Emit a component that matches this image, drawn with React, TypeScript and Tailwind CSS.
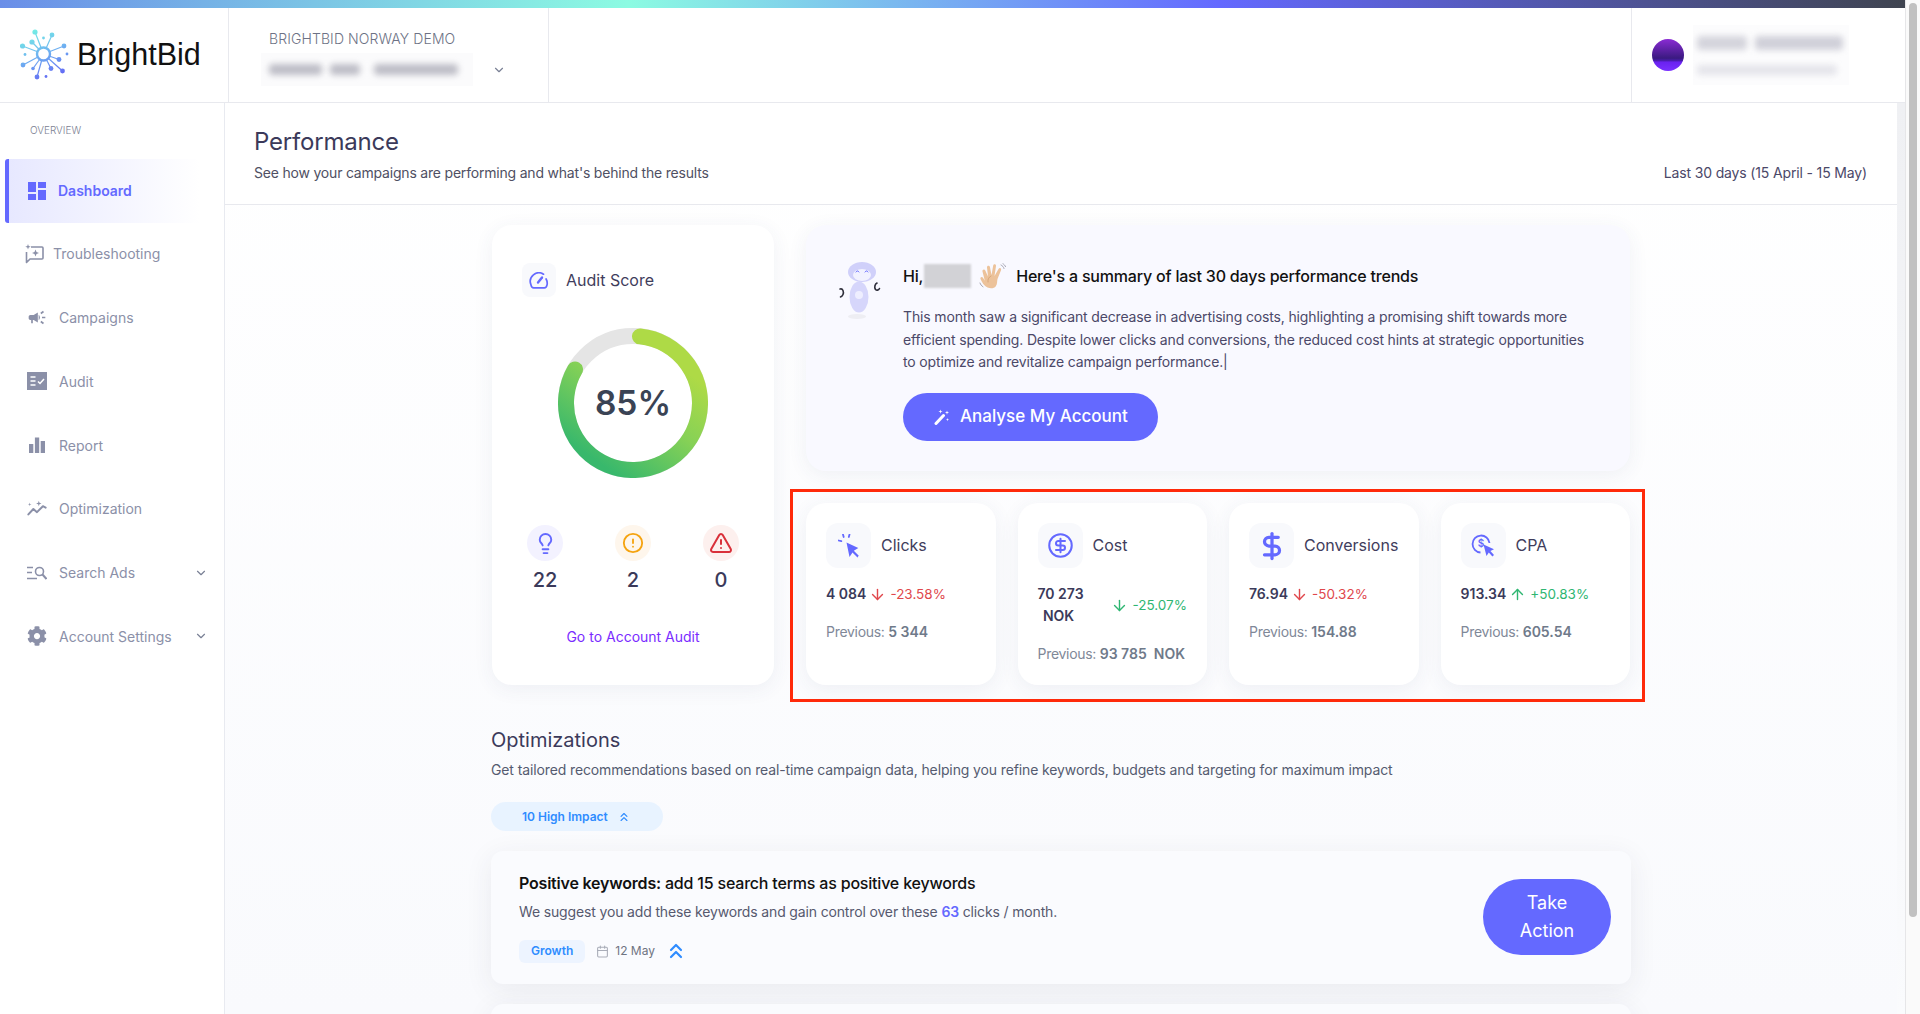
import React from "react";
import { Calendar, ChevronDown, ChevronsUp, CircleAlert, CircleDollarSign, DollarSign, Lightbulb, TriangleAlert, ArrowDown, ArrowUp } from "lucide-react";
import { FaCog } from "react-icons/fa";
import { MdCampaign, MdDashboard } from "react-icons/md";

const dots: [number, number, number][] = [
  [35, 32, 2.6], [52, 35, 2.4], [43.5, 38, 1.4], [32, 42, 2.6], [22.5, 46, 2.6],
  [25, 54.5, 1.4], [64, 46, 2.4], [67, 54, 1.4], [23, 65, 2.4], [59, 59.5, 2.4],
  [33, 68.5, 1.8], [51, 68.5, 2.4], [62.5, 71, 2.4], [37, 77, 2.4], [46, 76.5, 1.4],
];
const lines: [number, number][] = [
  [35, 32], [52, 35], [32, 42], [22.5, 46], [64, 46], [23, 65], [59, 59.5], [33, 68.5], [51, 68.5], [62.5, 71], [37, 77],
];

function Logo() {
  return (
    <svg width="50" height="52" viewBox="20 29 50 52" fill="none">
      <defs>
        <linearGradient id="logoGrad" gradientUnits="userSpaceOnUse" x1="30" y1="30" x2="50" y2="80">
          <stop offset="0" stopColor="#74f0e4" />
          <stop offset="0.45" stopColor="#6fb8f0" />
          <stop offset="1" stopColor="#6367f5" />
        </linearGradient>
      </defs>
      {lines.map(([x, y]) => (
        <line key={`${x}-${y}`} x1="43.5" y1="54" x2={x} y2={y} stroke="url(#logoGrad)" strokeWidth="1.2" />
      ))}
      <circle cx="43.5" cy="54" r="6.5" fill="#fff" stroke="url(#logoGrad)" strokeWidth="2.4" />
      {dots.map(([x, y, r]) => (
        <circle key={`${x}-${y}`} cx={x} cy={y} r={r} fill="url(#logoGrad)" />
      ))}
    </svg>
  );
}

function TroubleIcon() {
  return (
    <svg width="19" height="20" viewBox="0 0 19 20" fill="none" stroke="#8b90a8" strokeWidth="1.6" strokeLinejoin="round">
      <path d="M6 3h11a1 1 0 0 1 1 1v10a1 1 0 0 1-1 1H5l-3.500 3.500V8" />
      <path d="M10.500 5.500l1 2.500 2.500 1-2.500 1-1 2.500-1-2.500-2.500-1 2.500-1z" fill="#8b90a8" stroke="none" />
      <path d="M3 0l.7 2 2 .7-2 .7L3 5.400l-.7-2-2-.7 2-.7z" fill="#8b90a8" stroke="none" />
    </svg>
  );
}

function AuditIcon() {
  return (
    <svg width="20" height="18" viewBox="0 0 20 18" fill="none">
      <rect width="20" height="18" fill="#8b90a8" />
      <path d="M3.500 5h5M3.500 9h5M3.500 13h5" stroke="#fff" strokeWidth="1.500" />
      <path d="M11 9.500l2 2 4-4.500" stroke="#fff" strokeWidth="1.500" />
    </svg>
  );
}

function ReportIcon() {
  return (
    <svg width="16" height="16" viewBox="0 0 16 16" fill="#8b90a8">
      <rect x="0" y="7" width="4.300" height="9" />
      <rect x="5.900" y="0.500" width="4.300" height="15.500" />
      <rect x="11.700" y="4" width="4.300" height="12" />
    </svg>
  );
}

function OptimizeIcon() {
  return (
    <svg width="22" height="17" viewBox="0 0 22 17" fill="none">
      <path d="M1.500 15l5.500-6 4 3.500 6.500-6.500 3 1.500" stroke="#8b90a8" strokeWidth="2.200" strokeLinecap="round" strokeLinejoin="round" />
      <path d="M13 0l.7 2.300L16 3l-2.300.7L13 6l-.7-2.300L10 3l2.300-.7z" fill="#8b90a8" />
      <path d="M3 2l.4 1.600L5 4l-1.600.4L3 6l-.4-1.600L1 4l1.600-.4z" fill="#8b90a8" />
    </svg>
  );
}

function SearchAdsIcon() {
  return (
    <svg width="20" height="14" viewBox="0 0 20 14" fill="none" stroke="#8b90a8" strokeWidth="1.600">
      <path d="M0 1.500h6M0 6.500h5M0 12.500h10" />
      <circle cx="12.500" cy="5.500" r="4" />
      <path d="M15.500 8.500l4 4.500" strokeWidth="2" />
    </svg>
  );
}

function GaugeIcon() {
  return (
    <svg width="20" height="17" viewBox="0 0 20 17" fill="none" stroke="#6469ff" strokeWidth="1.700" strokeLinecap="round">
      <path d="M14.500 2.200A8.600 8.600 0 0 0 1.900 12.600c.3 1.600 1 3.200 2.800 3.200h10.600c1.800 0 2.500-1.600 2.800-3.200.4-2.300-.1-4-1-5.600" />
      <path d="M9 10.500L13 5.500" strokeWidth="2.400" />
    </svg>
  );
}

function ClicksIcon() {
  return (
    <svg width="22" height="24" viewBox="0 0 22 24" fill="none">
      <path d="M8.500 8.500l3 14.500 3-4.500 5 5 .5-.5-.2-.3 1-1-5-5 4.500-2.700z" fill="#6469ff" />
      <path d="M5 0.500l.7 2.500M11.500 0.500l-.7 2.500M0.500 6.500l2.800.7" stroke="#6469ff" strokeWidth="1.800" strokeLinecap="round" />
    </svg>
  );
}

function CpaIcon() {
  return (
    <svg width="24" height="25" viewBox="0 0 24 25" fill="none">
      <path d="M9.500 19.500a8.500 8.500 0 1 1 9-9.500" stroke="#6469ff" strokeWidth="1.800" />
      <text x="10" y="13.500" textAnchor="middle" fontSize="10" fontWeight="600" fill="#6469ff" fontFamily="Inter, sans-serif">$</text>
      <path d="M12.500 11.500l3 11.500 2.300-3.500 3.600 4 1.600-1.400-3.600-4 3.600-1.800z" fill="#6469ff" />
    </svg>
  );
}

function WandIcon() {
  return (
    <svg width="16" height="16" viewBox="0 0 16 16" fill="none">
      <path d="M2 14.500L9.500 6.500" stroke="#fff" strokeWidth="3" strokeLinecap="round" />
      <path d="M6.500 0.500l.5 1.600 1.600.5-1.600.5-.5 1.600-.5-1.600-1.600-.5 1.600-.5z" fill="#fff" />
      <path d="M13 1.500l.5 1.600 1.600.5-1.600.5-.5 1.600-.5-1.600-1.600-.5 1.600-.5z" fill="#fff" />
      <path d="M13.500 9l.4 1.200 1.200.4-1.200.4-.4 1.200-.4-1.200-1.200-.4 1.200-.4z" fill="#fff" />
    </svg>
  );
}

function WaveIcon() {
  return (
    <svg width="28" height="26" viewBox="0 0 28 26" fill="none">
      <path d="M8.500 24.500c-3.500-1.500-5.500-5-7-8.500-.6-1.800 1.500-2.700 2.500-1.200l1.800 3L3.500 8.500C3 6.500 5.500 5.700 6.300 7.500L9 13.500 8 4.500c-.2-2.200 2.500-2.400 3-.3L12.500 12 14.200 2.500c.4-2 3-1.600 2.800.5L15.500 13l4-7c1-1.800 3.300-.6 2.500 1.200L18.500 16c-.6 2.500 0 4.800-1.700 7.200-1.700 2.300-5.200 2.600-8.300 1.300z" fill="#ecc29a" />
      <path d="M12 13c-2 1-3.500 3-3 6" stroke="#d29f72" strokeWidth="0.800" strokeLinecap="round" />
      <path d="M22 2c1.500.7 2.500 1.800 3 3.500M24 .8c1 .5 2 1.500 2.500 2.800M1 20c.5 1.500 1.500 2.800 3 3.800" stroke="#9c9caa" strokeWidth="0.900" strokeLinecap="round" />
    </svg>
  );
}

function Mascot() {
  return (
    <svg width="46" height="58" viewBox="0 0 46 58" fill="none">
      <ellipse cx="20" cy="54.500" rx="9" ry="2.500" fill="#eeeef3" />
      <ellipse cx="22" cy="35" rx="9.500" ry="15.500" fill="#d6d6fb" />
      <circle cx="22" cy="33" r="4" fill="#eeeeff" />
      <ellipse cx="25" cy="10" rx="14" ry="10" fill="#d0d0fa" />
      <ellipse cx="25" cy="13" rx="9" ry="6" fill="#f2f2ff" />
      <path d="M19 10c1-1.500 2-1.500 3 0M28 10c1-1.500 2-1.500 3 0" stroke="#6469ff" strokeWidth="1" strokeLinecap="round" />
      <path d="M3 27c3-1 4 3 3 5.500-.5 1.300-1.500 2-2.500 2.500" stroke="#2e2e3a" strokeWidth="1.600" strokeLinecap="round" />
      <path d="M40 21c-2 1-3 4-1.500 6.500 1 1 3 1 4-1" stroke="#2e2e3a" strokeWidth="1.600" strokeLinecap="round" />
    </svg>
  );
}

function NavItem({ icon, label, chevron, tight }: { icon: React.ReactNode; label: string; chevron?: boolean; tight?: boolean }) {
  return (
    <div className={`flex h-[63.75px] items-center pb-[2px] pr-[16px] ${tight ? "pl-[24px]" : "pl-[27px]"}`}>
      <span className={`flex h-5 w-5 shrink-0 items-center justify-center ${tight ? "mr-[9px]" : "mr-3"}`}>{icon}</span>
      <span className="flex-1 text-[14px] text-[#8b90a8]">{label}</span>
      {chevron && <ChevronDown size={14} color="#7a8095" strokeWidth={2} />}
    </div>
  );
}

function Sidebar() {
  return (
    <aside className="w-[225px] shrink-0 border-r border-[#e8eaf0] bg-white">
      <p className="pl-[30px] pt-[20px] text-[10px] leading-[14px] font-light text-[#7b8092]">OVERVIEW</p>
      <div className="mt-[22px]">
        <div className="ml-[5px] flex h-[64px] w-[195px] items-center rounded-l-[3px] border-l-4 border-[#6469ff] bg-gradient-to-r from-[#e7e8ff] to-white pb-[1px] pl-[16px]">
          <MdDashboard size={24} color="#6469ff" className="mr-[9px] shrink-0" />
          <span className="text-[14px] font-semibold text-[#6469ff]">Dashboard</span>
        </div>
        <NavItem tight icon={<TroubleIcon />} label="Troubleshooting" />
        <NavItem icon={<MdCampaign size={27} color="#8b90a8" />} label="Campaigns" />
        <NavItem icon={<AuditIcon />} label="Audit" />
        <NavItem icon={<ReportIcon />} label="Report" />
        <NavItem icon={<OptimizeIcon />} label="Optimization" />
        <NavItem chevron icon={<SearchAdsIcon />} label="Search Ads" />
        <NavItem chevron icon={<FaCog size={20} color="#8b90a8" />} label="Account Settings" />
      </div>
    </aside>
  );
}

function AuditCard() {
  return (
    <div className="flex h-[460px] w-[282px] shrink-0 flex-col items-center rounded-[20px] bg-white pt-[38px] shadow-[0_4px_20px_rgba(60,70,110,0.07)]">
      <div className="flex w-full items-center pl-[30px]">
        <span className="flex h-[34px] w-[34px] items-center justify-center rounded-[8px] bg-[#f8f9fc]">
          <GaugeIcon />
        </span>
        <span className="ml-[10px] text-[16px] text-[#3f3d5c]">Audit Score</span>
      </div>
      <div className="relative mt-[31px] h-[150px] w-[150px]">
        <svg width="150" height="150" viewBox="0 0 150 150" fill="none">
          <defs>
            <linearGradient id="ringGrad" x1="0.85" y1="0.1" x2="0.25" y2="0.95">
              <stop offset="0.1" stopColor="#aeda46" />
              <stop offset="0.5" stopColor="#86d156" />
              <stop offset="1" stopColor="#38b86c" />
            </linearGradient>
          </defs>
          <circle cx="75" cy="75" r="67" stroke="#e5e5e5" strokeWidth="16" />
          <path d="M82 8.400A67 67 0 1 1 17 41.500" stroke="url(#ringGrad)" strokeWidth="16" strokeLinecap="round" />
        </svg>
        <span className="absolute inset-0 flex items-center justify-center text-[33.500px] font-semibold text-[#3a4354]">85%</span>
      </div>
      <div className="mt-[47px] grid w-full grid-cols-3 px-[9px] text-center">
        <AuditStat bg="bg-[#f3f2ff]" value="22" icon={<Lightbulb size={23} color="#6469ff" strokeWidth={2} />} />
        <AuditStat bg="bg-[#fef6ec]" value="2" icon={<CircleAlert size={22} color="#f5a30f" strokeWidth={2} />} />
        <AuditStat bg="bg-[#fdf0ee]" value="0" icon={<TriangleAlert size={24} color="#d9303a" strokeWidth={2} />} />
      </div>
      <a className="mt-[32px] text-[14px] leading-[22px] text-[#7a2cff]">Go to Account Audit</a>
    </div>
  );
}

function AuditStat({ bg, value, icon }: { bg: string; value: string; icon: React.ReactNode }) {
  return (
    <div className="flex flex-col items-center">
      <span className={`flex h-9 w-9 items-center justify-center rounded-full ${bg}`}>{icon}</span>
      <span className="mt-[5px] text-[20px] leading-[28px] font-medium text-[#3b3a5a]">{value}</span>
    </div>
  );
}

function SummaryCard() {
  return (
    <div className="flex h-[246px] rounded-[20px] bg-[#f9f9ff] pl-[31px] pt-[37px] shadow-[0_4px_20px_rgba(60,70,110,0.07)]">
      <div className="w-[46px] shrink-0">
        <Mascot />
      </div>
      <div className="ml-[20px] flex-1 pr-[30px]">
        <div className="flex h-[26px] items-center pt-[1px] text-[16px] font-medium tracking-[-0.2px] text-[#111]">
          <span>Hi,</span>
          <span className="ml-[1px] h-[24px] w-[47px] bg-[#d2d2d6] blur-[1px]" />
          <span className="ml-[8px]">
            <WaveIcon />
          </span>
          <span className="ml-[9px]">Here's a summary of last 30 days performance trends</span>
        </div>
        <p className="mt-[18px] text-[14px] leading-[22.700px] tracking-[-0.15px] text-[#4b4868]">
          This month saw a significant decrease in advertising costs, highlighting a promising shift towards more efficient spending. Despite lower clicks and conversions, the reduced cost hints at strategic opportunities to optimize and revitalize campaign performance.|
        </p>
        <button className="mt-[19px] flex h-12 w-[255px] items-center rounded-full bg-[#6469ff] pl-[31px] text-[17px] font-medium text-white">
          <span className="mr-[10px]">
            <WandIcon />
          </span>
          Analyse My Account
        </button>
      </div>
    </div>
  );
}

function MetricCard({ icon, label, value, delta, up, good, prev, split }: {
  icon: React.ReactNode; label: string; value: React.ReactNode; delta: string; up?: boolean; good?: boolean; prev: string; split?: boolean;
}) {
  const color = good ? "text-[#2fb672]" : "text-[#e0474c]";
  return (
    <div className="rounded-[20px] bg-white px-[20px] pt-[20px] shadow-[0_4px_20px_rgba(60,70,110,0.07)]">
      <div className="flex items-center">
        <span className="flex h-[45px] w-[45px] items-center justify-center rounded-[12px] bg-[#f8f9fc]">{icon}</span>
        <span className="ml-[10px] pb-[1px] text-[16px] text-[#3f3d5c]">{label}</span>
      </div>
      <div className={`mt-[15px] flex items-center text-[14px] leading-[22px] ${split ? "justify-between" : ""}`}>
        <span className="font-semibold text-[#3b3a5a]">{value}</span>
        <span className={`flex items-center text-[13.500px] ${split ? "" : "ml-[3px]"} ${color}`}>
          {up ? <ArrowUp size={17} strokeWidth={2} className="mr-[4px]" /> : <ArrowDown size={17} strokeWidth={2} className="mr-[4px]" />}
          {delta}
        </span>
      </div>
      <p className="mt-[16px] text-[14px] leading-[22px] tracking-[-0.3px] whitespace-pre text-[#7f8898]">
        Previous: <span className="font-semibold tracking-normal text-[#6f7a8a]">{prev}</span>
      </p>
    </div>
  );
}

function Metrics() {
  return (
    <div className="relative mt-[32px] grid h-[182px] grid-cols-4 gap-[22px]">
      <MetricCard icon={<ClicksIcon />} label="Clicks" value="4 084" delta="-23.58%" prev="5 344" />
      <MetricCard
        split
        good
        icon={<CircleDollarSign size={27} color="#6469ff" strokeWidth={1.8} />}
        label="Cost"
        value={
          <span className="block text-center">
            70 273
            <br />
            <span className="pr-[4px]">NOK</span>
          </span>
        }
        delta="-25.07%"
        prev="93 785  NOK"
      />
      <MetricCard icon={<DollarSign size={30} color="#6469ff" strokeWidth={2.6} />} label="Conversions" value="76.94" delta="-50.32%" prev="154.88" />
      <MetricCard up good icon={<CpaIcon />} label="CPA" value="913.34" delta="+50.83%" prev="605.54" />
      <div className="pointer-events-none absolute -bottom-[17px] -left-4 -right-[15px] -top-[14px] border-[3px] border-[#ff2a0a]" />
    </div>
  );
}

function OptimizationCard() {
  return (
    <div className="flex h-[133px] items-start justify-between rounded-[12px] bg-[#fafbfe] pl-[28px] pr-[20px] pt-[21px] shadow-[0_6px_28px_rgba(50,55,80,0.08)]">
      <div>
        <p className="text-[16px] leading-[22px] font-medium tracking-[-0.2px] text-[#111]">
          <span className="font-semibold">Positive keywords:</span> add 15 search terms as positive keywords
        </p>
        <p className="mt-[7px] text-[14px] leading-[22px] tracking-[-0.15px] text-[#56596e]">
          We suggest you add these keywords and gain control over these <span className="font-semibold text-[#6469ff]">63</span> clicks / month.
        </p>
        <div className="mt-[16px] flex items-center">
          <span className="flex h-[23px] items-center rounded-[6px] bg-[#edf4ff] px-[12px] text-[12px] font-semibold text-[#2f8cff]">Growth</span>
          <Calendar size={13} color="#a9adb8" className="ml-[11px]" />
          <span className="ml-[6px] text-[12px] text-[#6f7482]">12 May</span>
          <ChevronsUp size={24} color="#2f8cff" strokeWidth={2.2} className="ml-[9px]" />
        </div>
      </div>
      <button className="mt-[7px] h-[76px] w-[128px] rounded-[38px] bg-[#6469ff] px-[30px] text-[18px] leading-[28px] text-white">Take Action</button>
    </div>
  );
}

export default function App() {
  return (
    <div className="flex h-[1014px] w-full overflow-hidden bg-white font-['Inter',sans-serif]">
      <div className="flex min-w-0 flex-1 flex-col">
        <div className="h-2 shrink-0 bg-[linear-gradient(90deg,#6a8ee8_0%,#8cfbe2_33%,#6469ff_64%,#3f4450_100%)]" />
        <header className="flex h-[95px] shrink-0 border-b border-[#e8e9ee] bg-white">
          <div className="flex w-[229px] shrink-0 items-center border-r border-[#e8e9ee] pl-[20px]">
            <Logo />
            <span className="ml-[7px] font-['Liberation_Sans',sans-serif] text-[30.500px] text-[#111]">BrightBid</span>
          </div>
          <div className="flex w-[320px] shrink-0 flex-col border-r border-[#e8e9ee] pl-[40px]">
            <p className="mt-[22px] text-[14px] leading-[18px] font-light tracking-[0.1px] text-[#6d7285]">BRIGHTBID NORWAY DEMO</p>
            <div className="mt-[5px] flex h-[33px] items-center">
              <div className="ml-[-8px] flex h-[33px] w-[212px] items-start gap-[8px] overflow-hidden bg-[#fbfbfc] pl-[8px] pt-[11px]">
                <div className="h-[11px] w-[53px] rounded-sm bg-[#bdbdc6] blur-[3px]" />
                <div className="h-[11px] w-[30px] rounded-sm bg-[#bdbdc6] blur-[3px]" />
                <div className="ml-[6px] h-[11px] w-[84px] rounded-sm bg-[#bdbdc6] blur-[3px]" />
              </div>
              <ChevronDown size={14} color="#7a8095" className="ml-[19px]" />
            </div>
          </div>
          <div className="flex-1" />
          <div className="flex w-[274px] shrink-0 items-center border-l border-[#e8e9ee] pl-[20px]">
            <span className="h-8 w-8 rounded-full bg-[linear-gradient(180deg,#8a2bd4_0%,#3a1a80_60%,#4a1cb0_68%,#6a22f0_72%,#7a30ff_100%)]" />
            <div className="ml-[9px] h-[60px] w-[156px] overflow-hidden bg-[#fcfcfd] px-[4px] pt-[11px]">
              <div className="flex gap-[8px]">
                <div className="h-[14px] w-[50px] rounded-sm bg-[#d4d4dc] blur-[3px]" />
                <div className="h-[14px] w-[88px] rounded-sm bg-[#d0d0d9] blur-[3px]" />
              </div>
              <div className="mt-[15px] h-[10px] w-[140px] rounded-sm bg-[#e4e4ea] blur-[3px]" />
            </div>
          </div>
        </header>
        <div className="flex min-h-0 flex-1">
          <Sidebar />
          <main className="min-w-0 flex-1 overflow-hidden bg-gradient-to-b from-white to-[#f9fafd]">
            <div className="flex h-[102px] items-start justify-between border-b border-[#e8e9ee] bg-white pl-[29px] pr-[30px] pt-[23px]">
              <div>
                <h1 className="text-[24px] leading-[32px] font-normal tracking-[-0.2px] text-[#3b3a5a]">Performance</h1>
                <p className="mt-[4px] text-[14px] leading-[22px] tracking-[-0.2px] text-[#4f5063]">See how your campaigns are performing and what's behind the results</p>
              </div>
              <p className="mt-[36px] text-[14px] leading-[22px] tracking-[-0.15px] text-[#4b4868]">Last 30 days (15 April - 15 May)</p>
            </div>
            <div className="mx-auto w-[1140px] pt-[20px]">
              <div className="ml-[1px] flex w-[1138px] gap-[32px]">
                <AuditCard />
                <div className="min-w-0 flex-1">
                  <SummaryCard />
                  <Metrics />
                </div>
              </div>
              <h2 className="mt-[41px] text-[20px] leading-[28px] text-[#3b3a5a]">Optimizations</h2>
              <p className="mt-[5px] text-[14px] leading-[22px] tracking-[-0.12px] text-[#555b70]">
                Get tailored recommendations based on real-time campaign data, helping you refine keywords, budgets and targeting for maximum impact
              </p>
              <div className="mt-[21px] flex h-[29px] w-[172px] items-center rounded-full bg-[#e8f3ff] pl-[31px] text-[12px] font-semibold text-[#2f8cff]">
                10 High Impact
                <ChevronsUp size={14} color="#2f8cff" className="ml-[9px]" />
              </div>
              <div className="mt-[20px] flex flex-col gap-[20px]">
                <OptimizationCard />
                <div className="h-[133px] rounded-[12px] bg-[#fafbfe] shadow-[0_6px_28px_rgba(50,55,80,0.08)]" />
              </div>
            </div>
          </main>
          <div className="w-2 shrink-0 bg-gradient-to-b from-[#eff0f3] to-[#fafbfd]" />
        </div>
      </div>
      <div className="w-[15px] shrink-0 border-l border-[#e6e6e8] bg-[#fafafa] pt-[3px]">
        <div className="mx-auto h-[914px] w-2 rounded-full bg-[#c1c1c1]" />
      </div>
    </div>
  );
}
